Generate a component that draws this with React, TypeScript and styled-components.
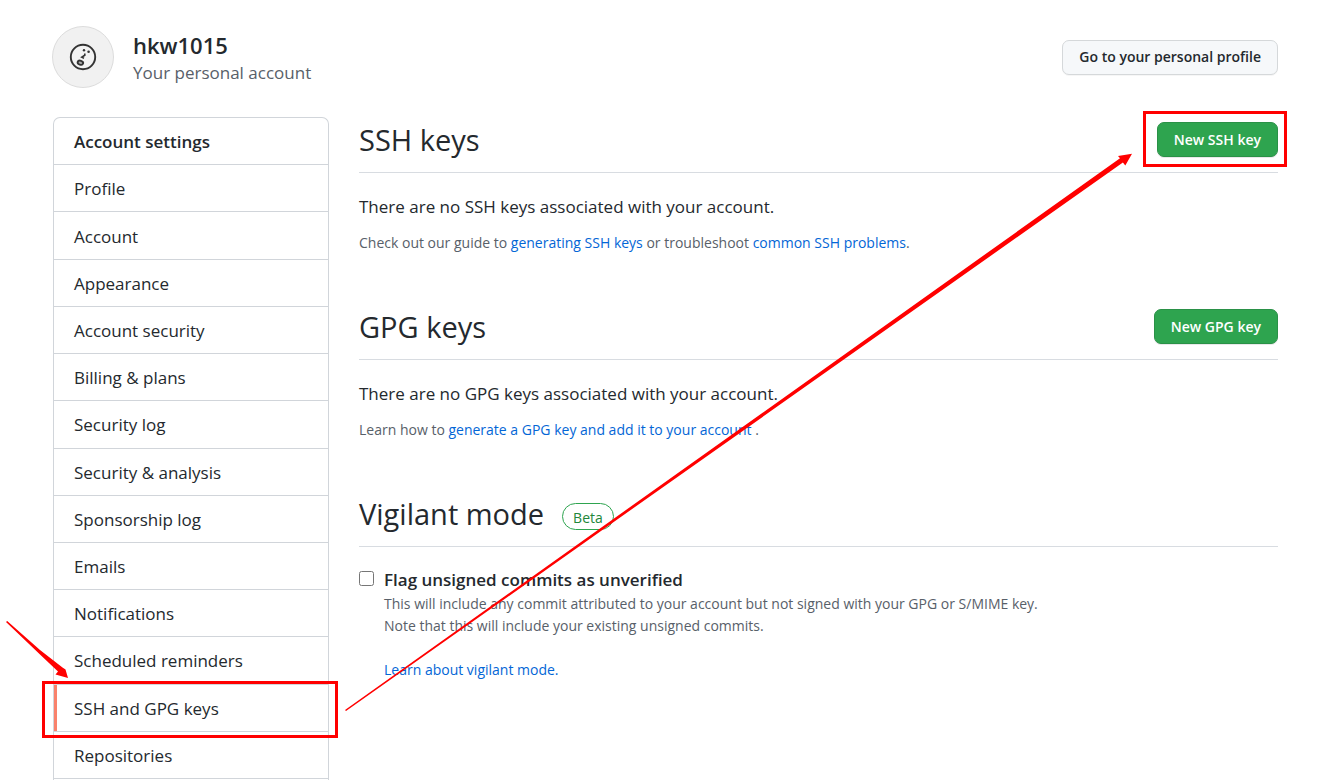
import React from "react";
import styled, { createGlobalStyle, css } from "styled-components";

const GlobalStyle = createGlobalStyle`
  *, *::before, *::after { box-sizing: border-box; }
  body {
    margin: 0;
    background: #ffffff;
    color: #24292e;
    font-family: "Open Sans", "Noto Sans", sans-serif;
    font-size: 17px;
    line-height: 26px;
  }
  h1, h2, p { margin: 0; }
`;

const Page = styled.div`
  position: relative;
  padding: 26px 45px 0 53px;
`;

const Header = styled.header`
  display: flex;
  align-items: center;
  gap: 19px;
  margin: 0 0 29px -1px;
`;

const Avatar = styled.svg`
  width: 62px;
  height: 62px;
  flex: none;
`;

const Identity = styled.div`
  flex: 1;
  padding-top: 2px;
`;

const UserName = styled.h1`
  font-size: 22px;
  font-weight: 600;
  line-height: 30px;
`;

const UserKind = styled.p`
  color: #586069;
  line-height: 26px;
`;

const Button = styled.button<{ $primary?: boolean }>`
  height: 35px;
  padding: 0 16px;
  border: 1px solid #d5d8da;
  border-radius: 7px;
  background: #f6f8fa;
  color: #24292e;
  font-family: inherit;
  font-size: 14px;
  font-weight: 600;
  line-height: 22px;
  white-space: nowrap;
  box-shadow: 0 1px 0 rgba(27, 31, 35, 0.04);
  cursor: pointer;
  ${({ $primary }) =>
    $primary &&
    css`
      border-color: #2a9147;
      background: #2ea44f;
      color: #ffffff;
      box-shadow: 0 1px 0 rgba(27, 31, 35, 0.1);
    `}
`;

const Columns = styled.div`
  display: flex;
  align-items: flex-start;
  gap: 30px;
`;

const Menu = styled.nav`
  display: grid;
  grid-auto-rows: 1fr;
  flex: 0 0 276px;
  min-height: 663px;
  padding-bottom: 1px;
  border: 1px solid #d1d5da;
  border-bottom: 0;
  border-radius: 7px 7px 0 0;
`;

const menuRow = css`
  display: flex;
  align-items: center;
  padding: 2px 20px 0;
  border-bottom: 1px solid #d1d5da;
  color: #24292e;
  font-size: 17px;
`;

const MenuTitle = styled.h2`
  ${menuRow}
  font-weight: 600;
`;

const MenuLink = styled.a<{ $current?: boolean }>`
  ${menuRow}
  position: relative;
  text-decoration: none;
  ${({ $current }) =>
    $current &&
    css`
      &::before {
        content: "";
        position: absolute;
        inset: 0 auto 0 0;
        width: 3px;
        background: #f9826c;
      }
    `}
`;

const Highlight = styled.span<{ $inset: string }>`
  position: absolute;
  inset: ${({ $inset }) => $inset};
  border: 3px solid #ff0000;
  pointer-events: none;
`;

const Main = styled.main`
  flex: 1;
  min-width: 0;
`;

const Section = styled.section`
  & + & {
    margin-top: 50px;
  }
`;

const SectionHead = styled.div`
  display: flex;
  align-items: center;
  justify-content: space-between;
  height: 56px;
  padding-bottom: 10px;
  border-bottom: 1px solid #d8dce1;
`;

const SectionTitle = styled.h2`
  display: flex;
  align-items: center;
  gap: 18px;
  font-size: 29px;
  font-weight: 400;
  line-height: 40px;
`;

const Badge = styled.span`
  height: 27px;
  margin-top: 6px;
  padding: 0 10px;
  border: 1px solid #2ea44f;
  border-radius: 14px;
  color: #22863a;
  font-size: 14px;
  line-height: 27px;
`;

const ActionSlot = styled.div`
  position: relative;
`;

const Empty = styled.p`
  margin: 21px 0 12px;
`;

const Note = styled.p`
  color: #586069;
  font-size: 14px;
  line-height: 22px;
`;

const Link = styled.a`
  color: #0366d6;
  text-decoration: none;
`;

const Option = styled.div`
  display: grid;
  grid-template-columns: 15px 1fr;
  column-gap: 10px;
  padding-top: 20px;
`;

const Checkbox = styled.input`
  width: 15px;
  height: 15px;
  margin: 4px 0 0;
`;

const OptionLabel = styled.label`
  font-weight: 600;
`;

const OptionText = styled.div`
  grid-column: 2;
`;

const MoreLink = styled(Note)`
  margin-top: 22px;
`;

const Arrows = styled.svg`
  position: absolute;
  top: 0;
  left: 0;
  width: 100%;
  height: 780px;
  pointer-events: none;
`;

const menuItems = [
  "Profile",
  "Account",
  "Appearance",
  "Account security",
  "Billing & plans",
  "Security log",
  "Security & analysis",
  "Sponsorship log",
  "Emails",
  "Notifications",
  "Scheduled reminders",
  "SSH and GPG keys",
  "Repositories",
];

const currentItem = "SSH and GPG keys";

export default function App() {
  return (
    <>
      <GlobalStyle />
      <Page>
        <Header>
          <Avatar viewBox="0 0 62 62" role="img" aria-label="hkw1015">
            <circle cx="31" cy="31" r="30.5" fill="#f1f1f1" stroke="#dcdcdc" />
            <circle cx="31" cy="31" r="12.2" fill="#f3f3f3" stroke="#333" strokeWidth="1.9" />
            <circle cx="32" cy="24.2" r="1.2" fill="#333" />
            <circle cx="36.6" cy="25.8" r="1.3" fill="#333" />
            <path d="M32.8 27.6V29.2L29.8 31.2 32 32.2" fill="none" stroke="#333" strokeWidth="1.6" />
            <ellipse cx="28.4" cy="36.7" rx="2.8" ry="2" transform="rotate(18 28.4 36.7)" fill="#aaa" stroke="#333" strokeWidth="1.9" />
          </Avatar>
          <Identity>
            <UserName>hkw1015</UserName>
            <UserKind>Your personal account</UserKind>
          </Identity>
          <Button type="button">Go to your personal profile</Button>
        </Header>

        <Columns>
          <Menu aria-label="Account settings">
            <MenuTitle>Account settings</MenuTitle>
            {menuItems.map((item) => (
              <MenuLink
                key={item}
                href="#"
                $current={item === currentItem}
                aria-current={item === currentItem ? "page" : undefined}
              >
                {item}
                {item === currentItem && <Highlight $inset="-4px -10px -7px -12px" />}
              </MenuLink>
            ))}
          </Menu>

          <Main>
            <Section>
              <SectionHead>
                <SectionTitle>SSH keys</SectionTitle>
                <ActionSlot>
                  <Button type="button" $primary>New SSH key</Button>
                  <Highlight $inset="-11px -9px -10px -14px" />
                </ActionSlot>
              </SectionHead>
              <Empty>There are no SSH keys associated with your account.</Empty>
              <Note>
                Check out our guide to <Link href="#">generating SSH keys</Link> or troubleshoot{" "}
                <Link href="#">common SSH problems</Link>.
              </Note>
            </Section>

            <Section>
              <SectionHead>
                <SectionTitle>GPG keys</SectionTitle>
                <Button type="button" $primary>New GPG key</Button>
              </SectionHead>
              <Empty>There are no GPG keys associated with your account.</Empty>
              <Note>
                Learn how to <Link href="#">generate a GPG key and add it to your account</Link> .
              </Note>
            </Section>

            <Section>
              <SectionHead>
                <SectionTitle>
                  Vigilant mode <Badge>Beta</Badge>
                </SectionTitle>
              </SectionHead>
              <Option>
                <Checkbox type="checkbox" id="vigilant" />
                <OptionLabel htmlFor="vigilant">Flag unsigned commits as unverified</OptionLabel>
                <OptionText>
                  <Note>
                    This will include any commit attributed to your account but not signed with your GPG or S/MIME key.
                    <br />
                    Note that this will include your existing unsigned commits.
                  </Note>
                  <MoreLink>
                    <Link href="#">Learn about vigilant mode.</Link>
                  </MoreLink>
                </OptionText>
              </Option>
            </Section>
          </Main>
        </Columns>

        <Arrows viewBox="0 0 1323 780" fill="#ff0000" aria-hidden="true">
          <path d="M6 622 7.2 621 40 650 62.5 667.5 65.5 669.5 68 678 55.5 674.5 58 671.5 40 654.5Z" />
          <path d="M345 710 1120 158.3 1118 156 1132 153.8 1125.3 165.5 1122.9 162.5 346 711Z" />
        </Arrows>
      </Page>
    </>
  );
}
